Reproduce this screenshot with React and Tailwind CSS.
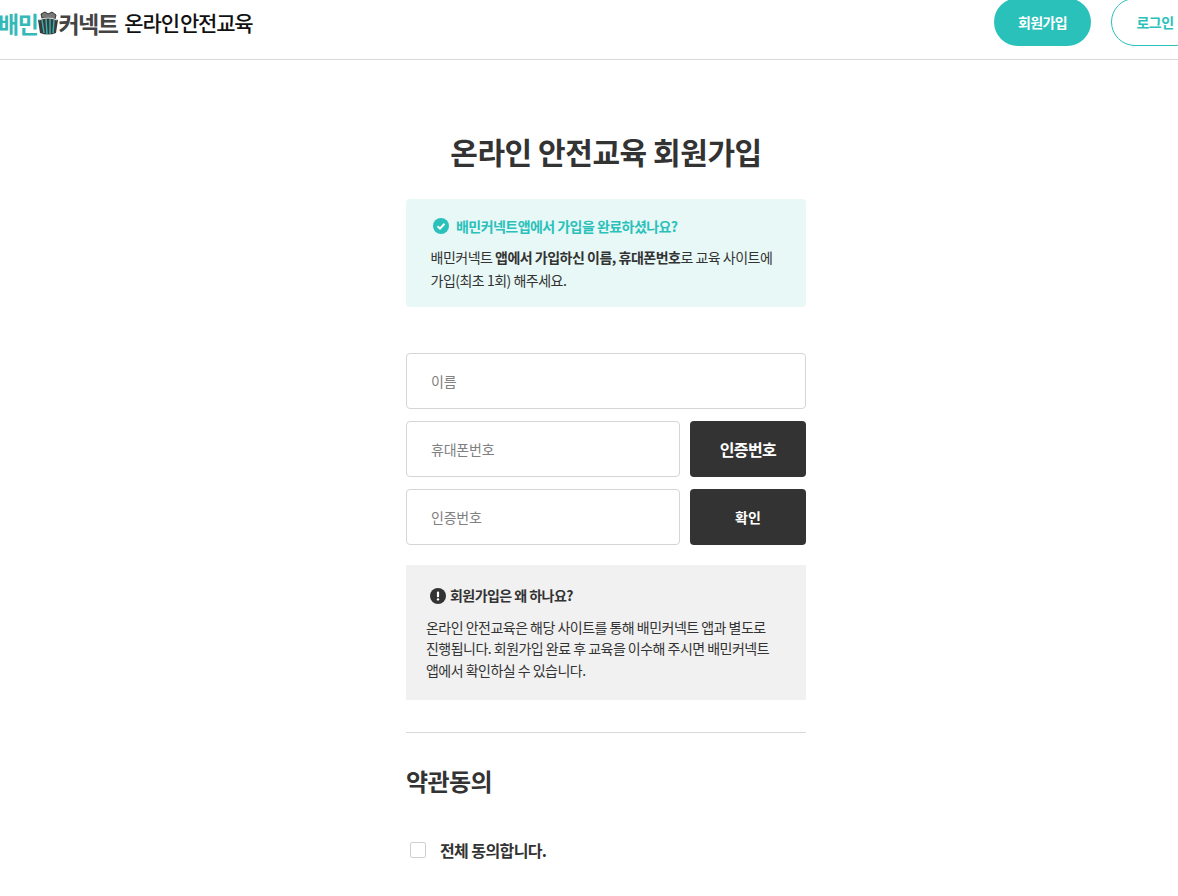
const font = { fontFamily: '"Noto Sans CJK KR", "Noto Sans", sans-serif' };

function Field({ placeholder, className = "" }) {
  return (
    <div className={`h-14 rounded border border-[#d5d5d5] bg-white flex items-center pl-6 text-sm text-[#808080] tracking-[-0.2px] ${className}`}>
      {placeholder}
    </div>
  );
}

function DarkButton({ children, className = "" }) {
  return (
    <button className={`w-[116px] h-14 rounded bg-[#333333] text-white font-bold flex items-center justify-center ${className}`}>
      {children}
    </button>
  );
}

function LogoMark() {
  return (
    <svg width="24" height="26" viewBox="0 0 24 26" className="shrink-0 -mx-[1.5px]">
      <path d="M6 8 L5 4 L9 2 L12 4 L16 2 L20 5 L19 9 Z" fill="#777" stroke="#333" strokeWidth="1" />
      <path d="M2 10 Q12 5 22 10 L20 23 Q12 26 4 23 Z" fill="#3c3c3c" />
      <path d="M6 10 L8 23 M10 9 L11 24 M14 9 L14 24 M18 10 L17 23" stroke="#35b5b5" strokeWidth="1.4" />
      <path d="M3 10 Q12 6 21 10" stroke="#ddd" strokeWidth="1.2" fill="none" />
    </svg>
  );
}

export default function App() {
  return (
    <div className="w-[1178px] h-[896px] overflow-hidden bg-white text-[#333333]" style={font}>
      <div className="w-[1212px]">
        <header className="h-[60px] border-b border-[#d9d9d9] flex items-start justify-between pr-[13px]">
          <div className="flex items-center -ml-[2px] mt-[7px] h-[32px]">
            <span className="text-[23px] font-bold tracking-[-1.4px] text-[#35b8b8]">배민</span>
            <LogoMark />
            <span className="text-[23px] font-bold tracking-[-1.6px] text-[#444444]">커넥트</span>
            <span className="ml-[7px] text-[21px] font-medium tracking-[-1.1px] text-[#111111]">온라인</span>
            <span className="ml-[1px] text-[21px] font-medium tracking-[-1.2px] text-[#111111]">안전교육</span>
          </div>
          <div className="flex gap-5 -mt-[2px]">
            <button className="w-[97px] h-12 rounded-full bg-[#2bc1bb] text-white text-sm font-bold tracking-[-0.6px]">회원가입</button>
            <button className="w-[88px] h-12 rounded-full border border-[#2bc1bb] bg-white text-[#2bc1bb] text-sm font-bold tracking-[-0.6px]">로그인</button>
          </div>
        </header>

        <main className="w-[400px] mx-auto">
          <h1 className="mt-[67px] text-[30px] leading-[48px] font-bold text-center tracking-[-0.45px]">온라인 안전교육 회원가입</h1>

          <section className="mt-6 h-[108px] rounded bg-[#e7f8f6] pl-[24.5px] pt-[15px]">
            <div className="flex items-center gap-[7px] pl-[2.5px] text-sm font-bold text-[#2bc1bb] tracking-[-0.55px] leading-[24px]">
              <svg width="16" height="16" viewBox="0 0 16 16" className="shrink-0">
                <circle cx="8" cy="8" r="8" fill="#2bc1bb" />
                <path d="M4.5 8.2 L7 10.6 L11.5 5.8" stroke="#fff" strokeWidth="2" fill="none" />
              </svg>
              배민커넥트앱에서 가입을 완료하셨나요?
            </div>
            <p className="mt-[8px] text-sm leading-[23px] tracking-[-0.5px]">
              배민커넥트 <b className="font-bold">앱에서 가입하신 이름, 휴대폰번호</b>로 교육 사이트에<br />
              가입(최초 1회) 해주세요.
            </p>
          </section>

          <section className="mt-[46px] flex flex-col gap-3">
            <Field placeholder="이름" />
            <div className="flex gap-[10px]">
              <Field placeholder="휴대폰번호" className="flex-1" />
              <DarkButton className="text-base tracking-[-0.6px]">인증번호</DarkButton>
            </div>
            <div className="flex gap-[10px]">
              <Field placeholder="인증번호" className="flex-1" />
              <DarkButton className="text-sm">확인</DarkButton>
            </div>
          </section>

          <section className="mt-5 h-[135px] bg-[#f1f1f1] pl-5 pt-[18px]">
            <div className="flex items-center gap-1 pl-1 text-sm font-bold leading-[24px] tracking-[-0.55px]">
              <svg width="16" height="16" viewBox="0 0 16 16" className="shrink-0 mt-[2px]">
                <circle cx="8" cy="8" r="8" fill="#333333" />
                <rect x="6.9" y="3.4" width="2.2" height="5.8" rx="1" fill="#fff" />
                <circle cx="8" cy="11.4" r="1.2" fill="#fff" />
              </svg>
              회원가입은 왜 하나요?
            </div>
            <p className="mt-[9.5px] text-sm leading-[21.5px] tracking-[-0.52px]">
              온라인 안전교육은 해당 사이트를 통해 배민커넥트 앱과 별도로<br />
              진행됩니다. 회원가입 완료 후 교육을 이수해 주시면 배민커넥트<br />
              앱에서 확인하실 수 있습니다.
            </p>
          </section>

          <hr className="mt-8 border-[#d9d9d9]" />

          <h2 className="mt-[28px] text-2xl leading-[40px] font-bold tracking-[-0.6px]">약관동의</h2>

          <label className="mt-[33px] flex items-center h-8 pl-1">
            <span className="w-4 h-4 rounded-[2px] border border-[#d0d0d0] bg-white" />
            <span className="ml-[14px] text-base font-bold tracking-[-0.6px]">전체 동의합니다.</span>
          </label>
        </main>
      </div>
    </div>
  );
}
